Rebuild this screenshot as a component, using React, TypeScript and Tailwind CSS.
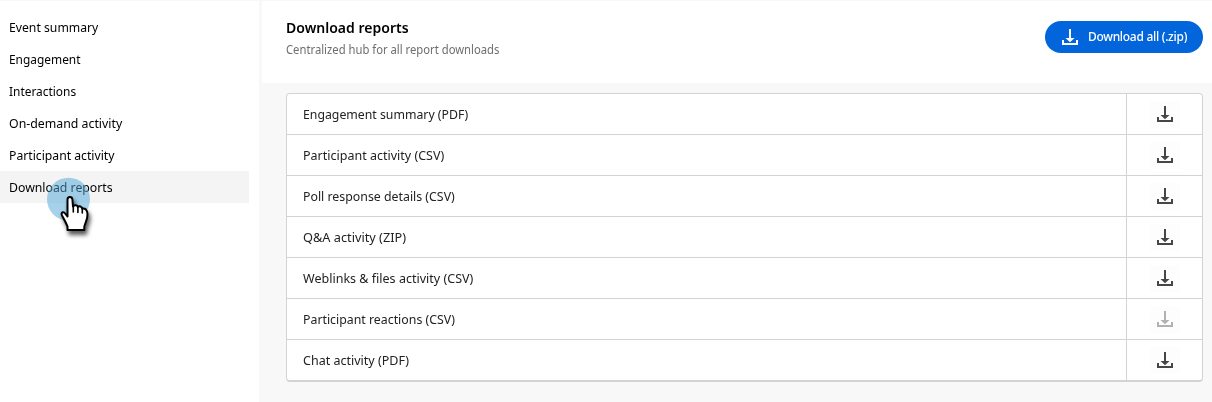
const navItems = [
  { label: 'Event summary', fit: 'scale-x-[0.939]' },
  { label: 'Engagement', fit: 'scale-x-[0.916]' },
  { label: 'Interactions', fit: 'scale-x-[0.916]' },
  { label: 'On-demand activity', fit: 'scale-x-[0.948]' },
  { label: 'Participant activity', fit: 'scale-x-[0.938]' },
  { label: 'Download reports', fit: 'scale-x-[0.944]', active: true },
];

const reports = [
  { label: 'Engagement summary (PDF)', fit: 'scale-x-[0.945]' },
  { label: 'Participant activity (CSV)', fit: 'scale-x-[0.962]' },
  { label: 'Poll response details (CSV)', fit: 'scale-x-[0.949]' },
  { label: 'Q&A activity (ZIP)', fit: 'scale-x-[0.981]' },
  { label: 'Weblinks & files activity (CSV)', fit: 'scale-x-[0.964]' },
  { label: 'Participant reactions (CSV)', fit: 'scale-x-[0.949]', disabled: true },
  { label: 'Chat activity (PDF)', fit: 'scale-x-[0.963]' },
];

function DownloadIcon({ className }: { className: string }) {
  return (
    <svg width="16" height="16" viewBox="0 0 16 16" fill="currentColor" className={className} aria-hidden="true">
      <path d="M7 0h2v9h3.500L8 13.200 3.500 9H7z" />
      <path d="M0 11h2v3h12v-3h2v5H0z" />
    </svg>
  );
}

function Pointer() {
  return (
    <div className="pointer-events-none absolute top-[7px] left-[47px]">
      <svg width="56" height="70" viewBox="0 0 56 70" className="overflow-visible" aria-hidden="true">
        <defs>
          <filter id="handShadow" x="-40%" y="-40%" width="200%" height="200%">
            <feDropShadow dx="2" dy="4" stdDeviation="2.200" floodColor="#000" floodOpacity="0.65" />
          </filter>
        </defs>
        <circle cx="21.500" cy="21.200" r="21.500" fill="#4ba3d8" fillOpacity="0.5" />
        <path
          filter="url(#handShadow)"
          fill="#fff"
          stroke="#000"
          strokeWidth="2"
          strokeLinejoin="round"
          d="M20.500 38.500V21.500Q20.500 19 22.900 19Q25.200 19 25.400 21.500L26 28.500Q27.200 26.800 29 27.300Q30.500 27.500 30.800 29Q32.500 27.800 34 28.800Q35 29.300 35.300 30.700Q37 30 38.800 31.400Q40.500 33 40.500 36Q40.500 40 39 43.500L37.300 48.500V52H20.500V48.500L18.200 43.500L15 37.500Q13.800 35 15.800 34.200Q17.500 33.700 20.500 38.500z"
        />
        <path d="M26.300 28v6M30.900 29v5.500M35.300 30.500v4.500" stroke="#000" strokeWidth="1.600" fill="none" strokeLinecap="round" />
      </svg>
    </div>
  );
}

export default function App() {
  return (
    <div className="flex h-[402px] w-full border-t border-[#f8f8f8] bg-[#f8f8f8] font-['Noto_Sans',sans-serif] text-[13px] text-black">
      <aside className="w-[259px] shrink-0 bg-white pt-[10px]">
        <nav className="w-[249px]">
          {navItems.map((item) => (
            <div
              key={item.label}
              className={`relative flex h-8 items-center pt-0.5 pl-[9px] whitespace-nowrap ${item.active ? 'bg-[#f4f4f4]' : ''}`}
            >
              <span className={`origin-left ${item.fit}`}>{item.label}</span>
              {item.active && <Pointer />}
            </div>
          ))}
        </nav>
      </aside>
      <main className="ml-[3px] flex min-w-0 flex-1 flex-col">
        <header className="flex h-[82px] shrink-0 justify-between bg-white pr-[9px] pl-6">
          <div className="pt-[15px]">
            <h1 className="origin-left scale-x-[0.935] text-[15px] leading-[22px] font-semibold">Download reports</h1>
            <p className="origin-left scale-x-[0.938] pt-0.5 text-[12px] leading-5 text-[#6e6e6e]">
              Centralized hub for all report downloads
            </p>
          </div>
          <button className="mt-5 flex h-8 w-[158px] items-center gap-[10px] rounded-full bg-[#0265dc] pl-[17px] font-medium whitespace-nowrap text-white">
            <DownloadIcon className="shrink-0" />
            <span className="origin-left scale-x-[0.92] tracking-[-0.3px]">Download all (.zip)</span>
          </button>
        </header>
        <section className="mt-[10px] mr-[9px] ml-6 overflow-hidden rounded-[4px] border border-b-2 border-[#d3d3d3] bg-white">
          {reports.map((report) => (
            <div key={report.label} className="flex h-[41px] border-b border-[#d3d3d3] last:h-10 last:border-b-0">
              <div className="flex flex-1 items-center pt-0.5 pl-4 text-[#222]">
                <span className={`origin-left ${report.fit}`}>{report.label}</span>
              </div>
              <div className="flex w-[76px] items-center justify-center border-l border-[#d3d3d3]">
                <div className="flex h-[27px] w-[30px] items-center justify-center bg-[#fdfdfd]">
                  <DownloadIcon className={report.disabled ? 'text-[#b1b1b1]' : 'text-[#464646]'} />
                </div>
              </div>
            </div>
          ))}
        </section>
      </main>
    </div>
  );
}
